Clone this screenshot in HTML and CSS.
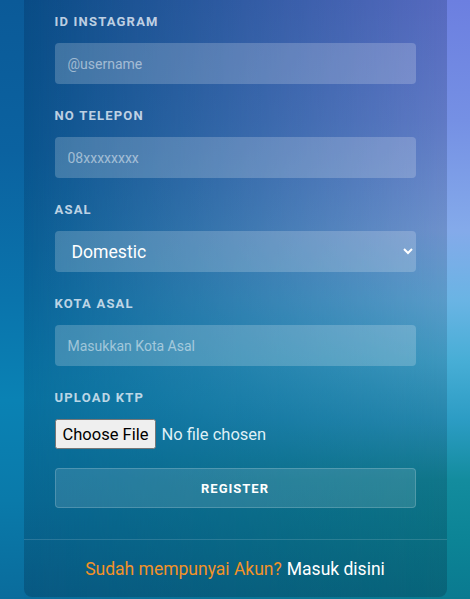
FILE: index.html
```html
<!DOCTYPE html>
<html lang="id">
<head>
<meta charset="utf-8">
<title>Register</title>
<link rel="stylesheet" href="styles.css">
</head>
<body>
<div class="page">
  <div class="glow"></div>
  <div class="wrap">
    <div class="card">
      <form class="form">
        <div class="group">
          <label class="label" for="ig">ID Instagram</label>
          <input class="field" id="ig" type="text" placeholder="@username">
        </div>
        <div class="group">
          <label class="label" for="tel">No Telepon</label>
          <input class="field" id="tel" type="text" placeholder="08xxxxxxxx">
        </div>
        <div class="group">
          <label class="label" for="asal">Asal</label>
          <select class="field select" id="asal">
            <option>Domestic</option>
            <option>International</option>
          </select>
        </div>
        <div class="group">
          <label class="label" for="kota">Kota Asal</label>
          <input class="field" id="kota" type="text" placeholder="Masukkan Kota Asal">
        </div>
        <div class="group group-file">
          <label class="label" for="ktp">Upload KTP</label>
          <input class="file" id="ktp" type="file">
        </div>
        <button class="btn" type="button">Register</button>
      </form>
      <div class="footer">
        <span class="q">Sudah mempunyai Akun?</span> <a class="link" href="#">Masuk disini</a>
      </div>
    </div>
  </div>
</div>
</body>
</html>
```
FILE: styles.css
```css
html, body {
  margin: 0;
  padding: 0;
  height: 599px;
  overflow: hidden;
}
body {
  font-family: Roboto, "Liberation Sans", sans-serif;
  background: linear-gradient(to bottom,
    #0b5a98 0px, #0b62a0 150px, #0a74ac 300px, #0a82b4 400px, #0a7aaa 500px, #0a6c9c 599px);
}
.page {
  display: grid;
  height: 599px;
}
.glow, .wrap {
  grid-area: 1 / 1;
}
.glow {
  z-index: 0;
  background: linear-gradient(to bottom,
    #6c7fe0 0px, #7590e4 120px, #84aaea 230px, #6ab4e4 300px, #48aed6 360px,
    #2c9cc4 420px, #138c9e 480px, #0c8496 540px, #0a7a90 599px);
  -webkit-mask-image: linear-gradient(to right, rgba(0,0,0,0) 5%, rgba(0,0,0,0.5) 50%, #000 95%);
  mask-image: linear-gradient(to right, rgba(0,0,0,0) 5%, rgba(0,0,0,0.5) 50%, #000 95%);
}
.wrap {
  z-index: 1;
  display: flex;
  justify-content: center;
  align-items: flex-start;
}
.card {
  width: 90%;
  height: 597px;
  display: flex;
  flex-direction: column;
  background: linear-gradient(to bottom, rgba(0, 20, 60, 0.2), rgba(0, 20, 50, 0.15) 60%, rgba(0, 20, 40, 0.22));
  border-radius: 0 0 8px 8px;
}
.form {
  display: flex;
  flex-direction: column;
  padding: 13px 31px 0;
}
.group {
  display: flex;
  flex-direction: column;
  align-items: stretch;
  margin-bottom: 23px;
}
.group-file {
  margin-bottom: 19px;
  align-items: flex-start;
}
.label {
  font-size: 13px;
  line-height: 18px;
  font-weight: 700;
  letter-spacing: 1.2px;
  text-transform: uppercase;
  color: rgba(235, 242, 250, 0.8);
  margin-bottom: 12px;
}
.field {
  box-sizing: border-box;
  height: 41px;
  border: none;
  border-radius: 4px;
  background: rgba(255, 255, 255, 0.2);
  color: #fff;
  font-family: Roboto, "Liberation Sans", sans-serif;
  font-size: 14px;
  padding: 0 13px;
  outline: none;
}
.field::placeholder {
  color: rgba(255, 255, 255, 0.5);
}
.select {
  font-size: 17.6px;
  padding: 0 8px 0 13px;
  color: #fff;
}
.select option {
  color: #000;
  font-size: 14px;
}
.file {
  display: block;
  height: 30px;
  font-family: Roboto, "Liberation Sans", sans-serif;
  font-size: 16.5px;
  color: #dff0f6;
  margin: 0;
}
.file::file-selector-button {
  font-family: Roboto, "Liberation Sans", sans-serif;
  font-size: 16.5px;
  height: 30px;
  padding: 0 6px;
  margin: 0 5px 0 0;
}
.btn {
  box-sizing: border-box;
  height: 40px;
  border: 1px solid rgba(255, 255, 255, 0.18);
  border-radius: 4px;
  background: rgba(255, 255, 255, 0.12);
  color: #fff;
  font-family: Roboto, "Liberation Sans", sans-serif;
  font-size: 13px;
  font-weight: 700;
  letter-spacing: 1px;
  text-transform: uppercase;
}
.footer {
  margin-top: auto;
  border-top: 1px solid rgba(255, 255, 255, 0.14);
  height: 57px;
  display: flex;
  align-items: center;
  justify-content: center;
  font-size: 17.5px;
  gap: 5px;
}
.q {
  color: #f39227;
}
.link {
  color: #fff;
  text-decoration: none;
}
```
